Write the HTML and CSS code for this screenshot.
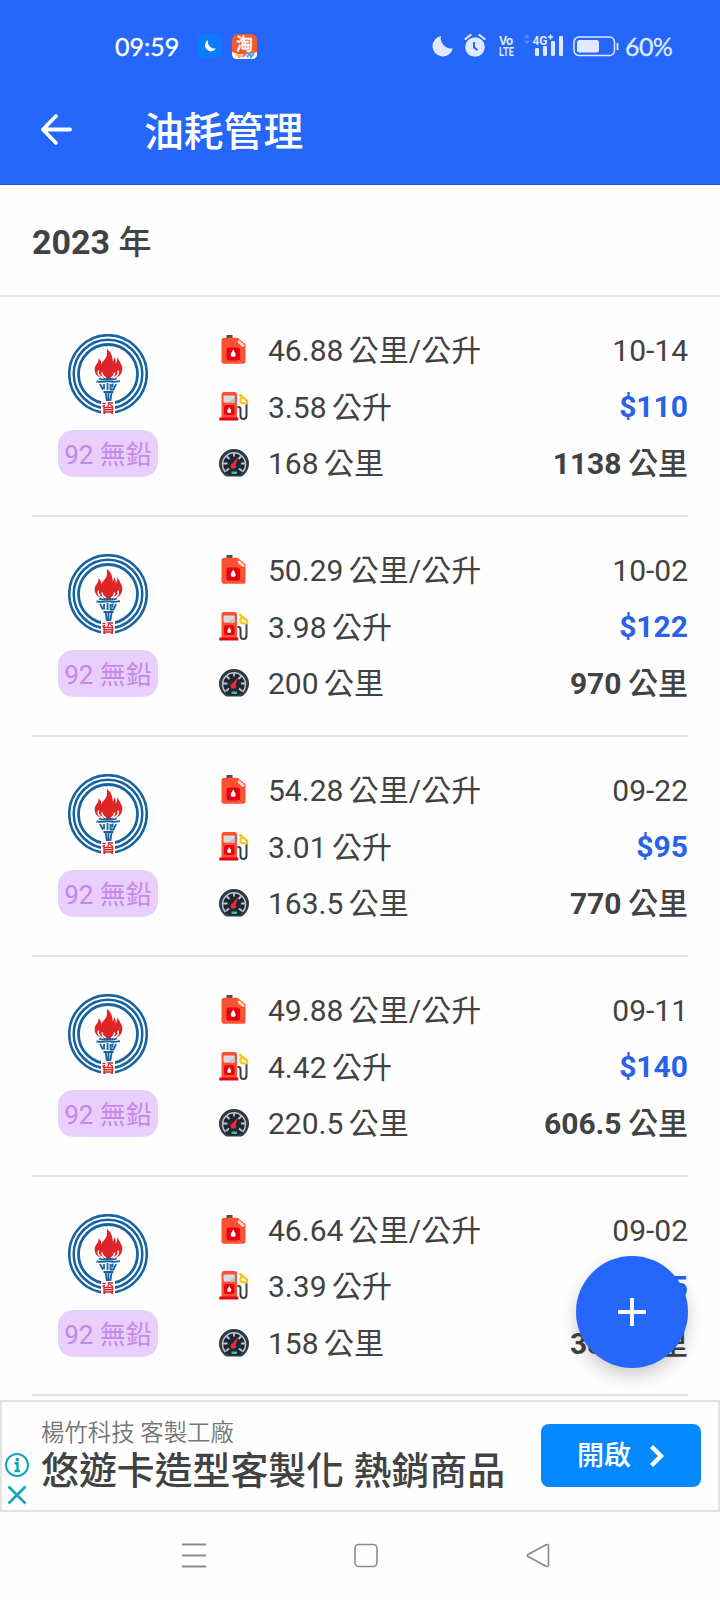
FILE: index.html
```html
<!DOCTYPE html>
<html lang="zh-Hant">
<head>
    <meta charset="UTF-8">
    <title>油耗管理</title>
    <link rel="stylesheet" href="styles.css">
</head>
<body>
    <!-- shared icons -->
    <svg class="defs" width="0" height="0">
        <symbol id="logo" viewBox="0 0 80 80">
            <g fill="none" stroke="#1763a0">
                <circle cx="40" cy="40" r="38.800" stroke-width="2.600"/>
                <circle cx="40" cy="40" r="34.300" stroke-width="2.500"/>
                <circle cx="40" cy="40" r="29.500" stroke-width="2.800"/>
            </g>
            <path d="M33 64h14v16h-14z" fill="#fff"/>
            <path d="M34 44C29 43 26 39 26.800 34C27.500 30 31 29 30.500 24.500C33 26 33.500 28 33 30.500C34.500 27 37 26 38.500 22.500C39.500 20 38.500 17.500 39 15C43 18 44.500 22 44.800 27.500C46 26 46 24.500 45.800 23C48 25.500 48 27 47.500 29.500C49 27.500 49.800 25.500 49 22.500C51 26 52 28 53.500 31C56 36 53 43 47 44L40 46z" fill="#dd2427"/>
            <path d="M30.500 36.500q-1.500 5 4.500 7.500M50 36.500q1.500 5-4.500 7.500M34 38.500q0 3.500 4 5.500M46.500 38.500q0 3.500-3.500 5.500" fill="none" stroke="#fff" stroke-width="1.500"/>
            <g fill="none" stroke="#1763a0" stroke-width="1.800">
                <path d="M31 44.500q4 2 9 .3q5 1.500 9-.3M28.500 47.500q7 1 11.500-.3q5 1.500 12 0M32 50l3 5.500M36 50v5.500M39.500 49v7M42.500 50v5.500h3l2.500-5.500M44.500 49.500v4M35.500 58h10M37.500 57.500l1.500 9.500M40.500 57v10M43.800 57.500l-1.500 9.500"/>
            </g>
            <g fill="none" stroke="#dd2427" stroke-width="1.400">
                <path d="M34.500 69.500h3M37 71.500l-2.500 1M39.500 69h5.500M42 68.500l-2.500 4M42 70.500l3 2M36 73.500h8.500v4.500h-8.500zM36 75.700h8.500M37.500 78.500l-2 1.500M43 78.500l2 1.500"/>
            </g>
        </symbol>
        <symbol id="can" viewBox="0 0 30 30">
            <path d="M7.500 0h6v4h-6z" fill="#46505c"/>
            <path d="M5.500 2.700h13l8 6.500v17q0 2.500-2.500 2.500H5Q2.500 28.700 2.500 26.200V5.500Q2.500 2.700 5.500 2.700z" fill="#fb5031"/>
            <rect x="7.500" y="12.500" width="13.500" height="13" rx="2.500" fill="#e60012"/>
            <path d="M20 7l4 3.500" stroke="#ffe3dc" stroke-width="2.800" stroke-linecap="round"/>
            <path d="M14.200 14.500q5 7.500 0 7.500t0-7.500z" fill="#fff"/>
        </symbol>
        <symbol id="pump" viewBox="0 0 30 30">
            <path d="M2.500 26V2.500Q2.500 0 5 0h10.500q2.500 0 2.500 2.500V26z" fill="#fb5031"/>
            <rect x="4.500" y="3.500" width="11.500" height="7" rx="1.500" fill="#d9dde3"/>
            <path d="M10 10.500l6-6v6z" fill="#bfc5cd"/>
            <rect x="5" y="13" width="10.500" height="10" rx="2.500" fill="#e60012"/>
            <path d="M10.200 15q4 6 0 6t0-6z" fill="#fff"/>
            <path d="M.3 25.500h19v3H.3z" fill="#e60012"/>
            <path d="M18.500 15h1q2 0 2 2v6.500q0 3.500 3 3.500t3-3.500V12" fill="none" stroke="#34424e" stroke-width="2"/>
            <path d="M20.500 2.500l7.500 6v4M21.500 9q-.5-3.500 3-3.500M21.500 9q0 3 5 2" fill="none" stroke="#f5c51d" stroke-width="2.300"/>
        </symbol>
        <symbol id="gauge" viewBox="0 0 30 30">
            <path d="M7.500 28.500A15 14.800 0 1 1 22.500 28.500z" fill="#303b46"/>
            <circle cx="15" cy="15.500" r="12" fill="#1d2833"/>
            <path d="M6.500 24A11.500 11.500 0 1 1 23.500 24" fill="none" stroke="#b9c4cd" stroke-width="1.400"/>
            <path d="M15 4.500v4M7.500 8l3 3M22.500 8l-3 3M4 15.500h4.500M22 15.500h4M7 23l3-2.500M23 23l-3-2.500" stroke="#b9c4cd" stroke-width="1.900"/>
            <path d="M19 9l-2.200 8a2.700 2.700 0 1 1-3.400-1.500z" fill="#f0283a"/>
            <path d="M12.500 23.500h5.500v2.500h-5.500z" fill="#35c4a4"/>
        </symbol>
    </svg>

    <header class="top">
        <div class="status">
            <span class="clock">09:59</span>
            <svg class="app-moon" width="24" height="24" viewBox="0 0 24 24">
                <rect width="24" height="24" rx="5" fill="#0b7bff"/>
                <path d="M10 6a6 6 0 1 0 8 8.500A7 7 0 0 1 10 6z" fill="#fff"/>
            </svg>
            <div class="app-tao">
                <span>淘</span>
                <svg width="25" height="8" viewBox="0 0 25 8">
                    <path d="M0 1q12 5 25 0v2q0 5-5 5H5q-5 0-5-5z" fill="#fff"/>
                    <path d="M4 3l4 2-2 2" stroke="#f9b233" stroke-width="2" fill="none"/>
                    <path d="M10 6l4-3" stroke="#f06ba0" stroke-width="2"/>
                    <path d="M15 6l3-4 1 4 3-4" stroke="#42a6ee" stroke-width="2" fill="none"/>
                </svg>
            </div>
            <div class="signals">
                <svg width="193" height="32" viewBox="0 0 193 32">
                    <g fill="#dfe9ff">
                        <path d="M9 6A10.300 10.300 0 1 0 20.800 18.500A10.500 10.500 0 0 1 9 6z"/>
                        <circle cx="43" cy="17" r="9.800"/>
                    </g>
                    <path d="M33.500 9l5-4M52.500 9l-5-4" stroke="#dfe9ff" stroke-width="2.200" stroke-linecap="round"/>
                    <path d="M42 12v5.500l3.500 2.500" stroke="#2566fb" stroke-width="2" fill="none"/>
                    <text class="tiny" x="67" y="14.700" textLength="14">Vo</text>
                    <text class="tiny" x="67" y="26" textLength="15" lengthAdjust="spacingAndGlyphs">LTE</text>
                    <path d="M92 8l3-4 3 4zM92 10.500l3 4 3-4z" fill="#5687fb"/>
                    <g fill="#dfe9ff">
                        <rect x="103" y="18" width="4" height="8" rx="1"/>
                        <rect x="111" y="16" width="4" height="10" rx="1"/>
                        <rect x="119" y="11" width="4" height="15" rx="1"/>
                        <rect x="127" y="6" width="4" height="20" rx="1"/>
                    </g>
                    <text class="tiny net" x="100.500" y="14.800" textLength="15" lengthAdjust="spacingAndGlyphs">4G</text>
                    <path d="M116 7h5M118.500 4.500v5" stroke="#dfe9ff" stroke-width="1.600"/>
                    <rect x="142" y="7" width="40.500" height="18.500" rx="5" fill="none" stroke="#dfe9ff" stroke-width="1.500"/>
                    <rect x="145" y="10" width="22" height="12.500" rx="2.500" fill="#dfe9ff"/>
                    <path d="M185.500 13v7" stroke="#dfe9ff" stroke-width="1.800"/>
                </svg>
                <span class="percent">60%</span>
            </div>
        </div>
        <div class="appbar">
            <svg width="34" height="34" viewBox="0 0 34 34" fill="none" stroke="#fff" stroke-width="3.800" stroke-linecap="round" stroke-linejoin="round">
                <path d="M31 16.500H4M17 3L4 16.500l13 13.500"/>
            </svg>
            <h1>油耗管理</h1>
        </div>
    </header>

    <h2 class="year">2023 <span>年</span></h2>

    <main class="list">
        <div class="record">
            <div class="station">
                <svg width="80" height="80"><use href="#logo"/></svg>
                <span class="badge">92 無鉛</span>
            </div>
            <div class="info">
                <div class="line"><svg width="30" height="30"><use href="#can"/></svg><span>46.88 公里/公升</span><span class="date">10-14</span></div>
                <div class="line"><svg width="30" height="30"><use href="#pump"/></svg><span>3.58 公升</span><b class="price">$110</b></div>
                <div class="line"><svg width="30" height="30"><use href="#gauge"/></svg><span>168 公里</span><b class="total">1138 <span>公里</span></b></div>
            </div>
        </div>
        <div class="record">
            <div class="station">
                <svg width="80" height="80"><use href="#logo"/></svg>
                <span class="badge">92 無鉛</span>
            </div>
            <div class="info">
                <div class="line"><svg width="30" height="30"><use href="#can"/></svg><span>50.29 公里/公升</span><span class="date">10-02</span></div>
                <div class="line"><svg width="30" height="30"><use href="#pump"/></svg><span>3.98 公升</span><b class="price">$122</b></div>
                <div class="line"><svg width="30" height="30"><use href="#gauge"/></svg><span>200 公里</span><b class="total">970 <span>公里</span></b></div>
            </div>
        </div>
        <div class="record">
            <div class="station">
                <svg width="80" height="80"><use href="#logo"/></svg>
                <span class="badge">92 無鉛</span>
            </div>
            <div class="info">
                <div class="line"><svg width="30" height="30"><use href="#can"/></svg><span>54.28 公里/公升</span><span class="date">09-22</span></div>
                <div class="line"><svg width="30" height="30"><use href="#pump"/></svg><span>3.01 公升</span><b class="price">$95</b></div>
                <div class="line"><svg width="30" height="30"><use href="#gauge"/></svg><span>163.5 公里</span><b class="total">770 <span>公里</span></b></div>
            </div>
        </div>
        <div class="record">
            <div class="station">
                <svg width="80" height="80"><use href="#logo"/></svg>
                <span class="badge">92 無鉛</span>
            </div>
            <div class="info">
                <div class="line"><svg width="30" height="30"><use href="#can"/></svg><span>49.88 公里/公升</span><span class="date">09-11</span></div>
                <div class="line"><svg width="30" height="30"><use href="#pump"/></svg><span>4.42 公升</span><b class="price">$140</b></div>
                <div class="line"><svg width="30" height="30"><use href="#gauge"/></svg><span>220.5 公里</span><b class="total">606.5 <span>公里</span></b></div>
            </div>
        </div>
        <div class="record">
            <div class="station">
                <svg width="80" height="80"><use href="#logo"/></svg>
                <span class="badge">92 無鉛</span>
            </div>
            <div class="info">
                <div class="line"><svg width="30" height="30"><use href="#can"/></svg><span>46.64 公里/公升</span><span class="date">09-02</span></div>
                <div class="line"><svg width="30" height="30"><use href="#pump"/></svg><span>3.39 公升</span><b class="price">$105</b></div>
                <div class="line"><svg width="30" height="30"><use href="#gauge"/></svg><span>158 公里</span><b class="total">386 <span>公里</span></b></div>
            </div>
        </div>
        <button class="add" aria-label="新增">
            <svg width="28" height="28" viewBox="0 0 28 28" stroke="#fff" stroke-width="4"><path d="M0 14h28M14 0v28"/></svg>
        </button>
    </main>

    <section class="ad">
        <div class="ad-marks">
            <svg width="26" height="26" viewBox="0 0 26 26" fill="none" stroke="#12a4b8">
                <circle cx="13" cy="13" r="11" stroke-width="2"/>
                <path d="M13.300 6v3.200" stroke-width="3.200"/>
                <path d="M10.500 11.200h3V19M10.500 19h5.500" stroke-width="2.400"/>
            </svg>
            <svg width="20" height="20" viewBox="0 0 20 20" stroke="#12a4b8" stroke-width="2.600"><path d="M1.500 1.500l17 17M18.500 1.500l-17 17"/></svg>
        </div>
        <div class="ad-text">
            <div class="ad-brand">楊竹科技 客製工廠</div>
            <div class="ad-title">悠遊卡造型客製化 熱銷商品</div>
        </div>
        <button class="ad-open"><span>開啟</span>
            <svg width="16" height="24" viewBox="0 0 16 24" fill="none" stroke="#fff" stroke-width="4.500"><path d="M2.500 2.500L12 12l-9.500 9.500"/></svg>
        </button>
    </section>

    <nav class="nav">
        <svg width="24" height="26" viewBox="0 0 24 26" stroke="#8a8a8a" stroke-width="1.800"><path d="M0 1.500h24M0 12.500h24M0 23.500h24"/></svg>
        <svg width="24" height="26" viewBox="0 0 24 26" fill="none" stroke="#8a8a8a" stroke-width="1.600"><rect x="1" y="1.500" width="22" height="22" rx="4"/></svg>
        <svg width="24" height="26" viewBox="0 0 24 26" fill="none" stroke="#8a8a8a" stroke-width="1.600" stroke-linejoin="round"><path d="M2 11.500q-1.500 1 0 2L20 23.200q2.500 1 2.500-1.200V3q0-2.200-2.500-1.200z"/></svg>
    </nav>
</body>
</html>
```

FILE: styles.css
```css
* {
    box-sizing: border-box;
}

body {
    margin: 0;
    width: 720px;
    height: 1600px;
    overflow: hidden;
    display: flex;
    flex-direction: column;
    background: #fefefe;
    color: #424242;
    font-family: Roboto, "Noto Sans CJK TC", sans-serif;
}

svg {
    display: block;
    flex: none;
}

.defs {
    position: absolute;
}

button {
    border: none;
    font-family: inherit;
    color: #fff;
}

/* top bar */
.top {
    height: 185px;
    flex: none;
    background: #2566fb;
    border-bottom: 1px solid #2152d0;
    color: #fff;
}

.status {
    height: 92px;
    padding: 0 0 0 115px;
    display: flex;
    align-items: center;
    font-family: Lato, sans-serif;
    font-size: 25px;
    -webkit-text-stroke: 0.3px;
}

.clock {
    width: 83px;
}

.app-tao {
    width: 25px;
    height: 25px;
    margin-left: 10px;
    border-radius: 6px;
    background: #f4582b;
    font: 500 17px/17px "Noto Sans CJK TC", sans-serif;
    text-align: center;
}

.app-tao span {
    display: block;
    height: 17px;
}

.signals {
    display: flex;
    align-items: center;
    margin-left: 175px;
    color: #dfe9ff;
}

.tiny {
    font: 700 12.5px Roboto, sans-serif;
    fill: #dfe9ff;
    -webkit-text-stroke: 0;
}

.tiny.net {
    font-size: 13.5px;
}

.percent {
    letter-spacing: -0.6px;
}

.appbar {
    display: flex;
    align-items: center;
    height: 76px;
    padding-left: 39px;
}

h1 {
    margin: 5px 0 0 71px;
    font-size: 39.8px;
    line-height: 60px;
    font-weight: 500;
}

.year {
    flex: none;
    height: 112px;
    margin: 0;
    padding-left: 32px;
    border-bottom: 2px solid #e6e6e6;
    font-size: 34px;
    line-height: 114px;
    font-weight: 700;
}

.year span {
    font-size: 33px;
    font-weight: 500;
}

/* records */
.list {
    position: relative;
    flex: none;
    height: 1103px;
    padding: 0 32px;
}

.record {
    display: flex;
    height: 219.9px;
    border-bottom: 2px solid #e3e3e3;
}

.station {
    display: flex;
    flex-direction: column;
    align-items: center;
    width: 152px;
    padding-top: 37px;
}

.badge {
    width: 100px;
    height: 47px;
    margin-top: 16px;
    border-radius: 15px;
    background: #e8cffc;
    color: #c586ea;
    font-size: 26px;
    line-height: 50px;
    text-align: center;
}

.info {
    flex: 1;
    padding: 25px 0 0 35px;
}

.line {
    display: flex;
    align-items: center;
    height: 56.6px;
    font-size: 30px;
    line-height: 36px;
    word-spacing: -2px;
    white-space: nowrap;
}

.line > svg {
    margin-right: 19px;
}

.line > span,
.line > b {
    padding-top: 2px;
}

.line > .price {
    padding-top: 1px;
}

.date,
.price,
.total {
    margin-left: auto;
}

.price {
    color: #2962e8;
}

.total {
    word-spacing: -1px;
}

.total span {
    font-weight: 500;
}

.add {
    position: absolute;
    right: 32px;
    bottom: 32px;
    display: flex;
    align-items: center;
    justify-content: center;
    width: 112px;
    height: 112px;
    border-radius: 50%;
    background: #2566fb;
    box-shadow: 0 8px 18px rgba(0, 0, 0, 0.2);
}

/* ad */
.ad {
    flex: none;
    display: flex;
    height: 112px;
    border: 2px solid #e3e3e3;
    background: #fefefe;
}

.ad-marks {
    display: flex;
    flex-direction: column;
    align-items: center;
    gap: 7px;
    width: 30px;
    padding-top: 50px;
}

.ad-text {
    width: 507px;
    padding: 12px 0 0 9px;
    white-space: nowrap;
}

.ad-brand {
    font-size: 23.4px;
    line-height: 38px;
    color: #757575;
    font-weight: 350;
}

.ad-title {
    font-size: 37.9px;
    line-height: 38px;
    font-weight: 500;
}

.ad-open {
    display: flex;
    align-items: center;
    justify-content: center;
    gap: 18px;
    width: 160px;
    height: 63px;
    margin-top: 22px;
    margin-left: 2px;
    border-radius: 8px;
    background: #0488ff;
    font-size: 27px;
    font-weight: 500;
}

.ad-open span {
    height: 32px;
    line-height: 32px;
}

.nav {
    flex: 1;
    display: flex;
    gap: 148px;
    padding: 31px 0 0 182px;
}
```
